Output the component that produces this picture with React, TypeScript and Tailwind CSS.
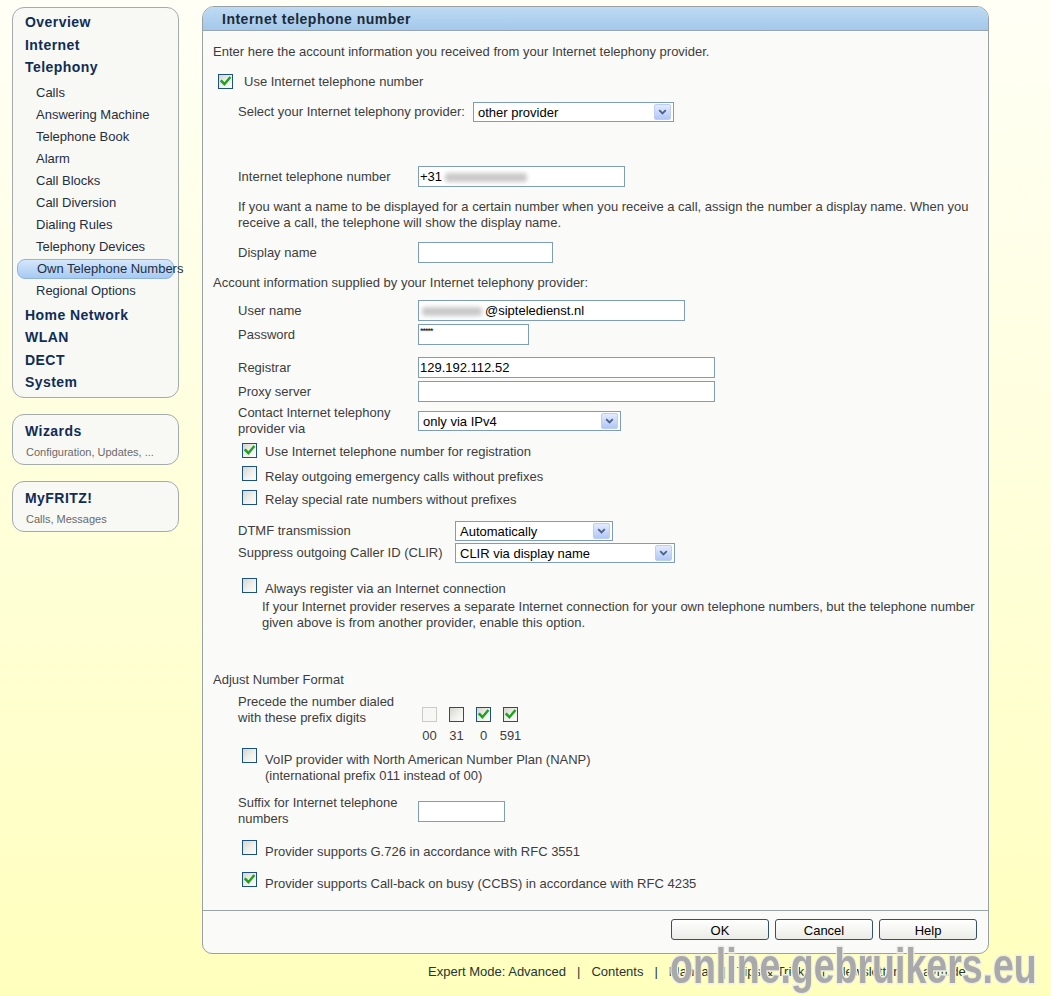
import React from "react";

const Check = () => (
  <svg width="13" height="13" viewBox="0 0 13 13">
    <path d="M2.6 6.2 L5.4 9.2 L10.6 3" fill="none" stroke="#21a121" strokeWidth="2.5" strokeLinecap="square" />
  </svg>
);

function Checkbox({ checked = false, disabled = false, className = "" }: { checked?: boolean; disabled?: boolean; className?: string }) {
  const base = disabled
    ? "border-[#cbcbc3] bg-[#f7f7f4]"
    : "border-[#1c5180] bg-linear-to-br from-[#d6d6ce] via-[#eeeeea] to-[#fdfdfc]";
  return (
    <span className={"flex shrink-0 w-[15px] h-[15px] border items-center justify-center " + base + " " + className}>
      {checked ? <Check /> : null}
    </span>
  );
}

function Select({ value, className = "" }: { value: string; className?: string }) {
  return (
    <div className={"flex h-[20px] items-center border border-[#7f9db9] bg-white " + className}>
      <span className="pl-[4px] pt-[1px] text-[13px] leading-[16px] text-black whitespace-nowrap">{value}</span>
      <span className="ml-auto mr-[2px] flex h-[16px] w-[17px] items-center justify-center rounded-[2px] border border-[#bccdf7] bg-linear-to-b from-[#e3ebfe] to-[#b3c7f5]">
        <svg width="9" height="6" viewBox="0 0 9 6">
          <path d="M1.2 1.2 L4.5 4.4 L7.8 1.2" fill="none" stroke="#4d6185" strokeWidth="1.8" />
        </svg>
      </span>
    </div>
  );
}

function Input({ className = "", children }: { className?: string; children?: React.ReactNode }) {
  return (
    <div className={"flex h-[21px] items-center border border-[#7f9db9] bg-white pl-[1px] pt-[1px] text-[13px] leading-[16px] text-black whitespace-nowrap overflow-hidden " + className}>
      {children}
    </div>
  );
}

const Blur = ({ className = "" }: { className?: string }) => (
  <span className={"inline-block h-[9px] rounded-[3px] bg-[#c9c9c9] blur-[2px] " + className} />
);

function Heading({ children, h = "h-[22px]" }: { children: React.ReactNode; h?: string }) {
  return (
    <div className={"flex items-center pl-[12px] text-[14px] font-bold tracking-[0.45px] text-[#0f2d55] " + h}>{children}</div>
  );
}

function Sub({ children }: { children: React.ReactNode }) {
  return <div className="flex h-[22px] items-center pl-[23px] text-[13px] text-[#1f2f3f] whitespace-nowrap">{children}</div>;
}

function Button({ children }: { children: React.ReactNode }) {
  return (
    <div className="flex h-[21px] w-[98px] items-center justify-center rounded-[3px] border border-[#34506c] bg-linear-to-b from-[#ffffff] to-[#ebebe6] pt-[2px] text-[13px] text-black">
      {children}
    </div>
  );
}

export default function App() {
  return (
    <div className="relative flex h-[996px] w-[1051px] overflow-hidden bg-linear-to-b from-[#fffff6] to-[#ffffbd] font-['Liberation_Sans',Arial,sans-serif]">
      {/* Sidebar */}
      <aside className="ml-[12px] mt-[7px] flex w-[167px] shrink-0 flex-col">
        <div className="rounded-[12px] border border-[#a3abab] bg-[#f8f8f5] pt-[3px] pb-[4px]">
          <Heading h="h-[23px]">Overview</Heading>
          <Heading>Internet</Heading>
          <Heading>Telephony</Heading>
          <div className="mt-[4px]">
            <Sub>Calls</Sub>
            <Sub>Answering Machine</Sub>
            <Sub>Telephone Book</Sub>
            <Sub>Alarm</Sub>
            <Sub>Call Blocks</Sub>
            <Sub>Call Diversion</Sub>
            <Sub>Dialing Rules</Sub>
            <Sub>Telephony Devices</Sub>
            <div className="flex h-[22px] items-center">
              <div className="ml-[4px] flex h-[20px] w-[157px] items-center rounded-[8px] border border-[#8fb4de] bg-linear-to-b from-[#d5e7fb] to-[#a6caf2] pl-[19px] text-[13px] text-[#1f2f3f] whitespace-nowrap">
                Own Telephone Numbers
              </div>
            </div>
            <Sub>Regional Options</Sub>
          </div>
          <div className="mt-[2px]">
            <Heading>Home Network</Heading>
            <Heading h="h-[23px]">WLAN</Heading>
            <Heading>DECT</Heading>
            <Heading>System</Heading>
          </div>
        </div>

        <div className="mt-[16px] rounded-[12px] border border-[#a3abab] bg-[#f8f8f5] pt-[5px] pb-[4px]">
          <Heading>Wizards</Heading>
          <div className="mt-[2px] flex h-[16px] items-center pl-[13px] text-[11px] text-[#6a6a6a] whitespace-nowrap">Configuration, Updates, ...</div>
        </div>

        <div className="mt-[16px] rounded-[12px] border border-[#a3abab] bg-[#f8f8f5] pt-[5px] pb-[4px]">
          <Heading>MyFRITZ!</Heading>
          <div className="mt-[2px] flex h-[16px] items-center pl-[13px] text-[11px] text-[#6a6a6a] whitespace-nowrap">Calls, Messages</div>
        </div>
      </aside>

      {/* Main */}
      <main className="ml-[23px] mt-[6px] w-[787px] shrink-0">
        <div className="overflow-hidden rounded-t-[12px] rounded-b-[10px] border border-[#98a2a4] bg-[#fafaf8]">
          <div className="flex h-[24px] items-center border-b border-[#9aa6ae] bg-linear-to-b from-[#bedaf3] to-[#a4c8ea] pl-[19px] pt-[1px] text-[14px] font-bold tracking-[0.5px] text-[#1c2a38]">
            Internet telephone number
          </div>

          <div className="px-[10px] text-[13px] leading-[16px] text-[#3d3d3d]">
            <p className="mt-[13px] whitespace-nowrap">Enter here the account information you received from your Internet telephony provider.</p>

            <div className="mt-[12px] flex h-[20px] items-center pl-[5px]">
              <Checkbox checked className="-mt-[1px]" />
              <span className="ml-[11px]">Use Internet telephone number</span>
            </div>

            <div className="mt-[10px] flex h-[20px] items-center pl-[25px]">
              <span className="w-[235px] shrink-0 whitespace-nowrap">Select your Internet telephony provider:</span>
              <Select value="other provider" className="w-[201px]" />
            </div>

            <div className="mt-[44px] flex h-[21px] items-center pl-[25px]">
              <span className="w-[180px] shrink-0">Internet telephone number</span>
              <Input className="w-[207px]">
                +31<Blur className="ml-[3px] w-[82px]" />
              </Input>
            </div>

            <p className="mt-[12px] pl-[25px] whitespace-nowrap">
              If you want a name to be displayed for a certain number when you receive a call, assign the number a display name. When you
              <br />
              receive a call, the telephone will show the display name.
            </p>

            <div className="mt-[11px] flex h-[21px] items-center pl-[25px]">
              <span className="w-[180px] shrink-0">Display name</span>
              <Input className="w-[135px]" />
            </div>

            <p className="mt-[12px] whitespace-nowrap">Account information supplied by your Internet telephony provider:</p>

            <div className="mt-[9px] flex h-[21px] items-center pl-[25px]">
              <span className="w-[180px] shrink-0">User name</span>
              <Input className="w-[267px]">
                <Blur className="ml-[2px] w-[60px]" />
                <span className="ml-[3px]">@sipteledienst.nl</span>
              </Input>
            </div>

            <div className="mt-[3px] flex h-[21px] items-center pl-[25px]">
              <span className="w-[180px] shrink-0">Password</span>
              <div className="h-[21px] w-[111px] border border-[#7f9db9] bg-white pl-[1px] pt-[2px] text-[9px] leading-[9px] tracking-[-1px] text-black">*****</div>
            </div>

            <div className="mt-[12px] flex h-[21px] items-center pl-[25px]">
              <span className="w-[180px] shrink-0">Registrar</span>
              <Input className="w-[297px]">129.192.112.52</Input>
            </div>

            <div className="mt-[3px] flex h-[21px] items-center pl-[25px]">
              <span className="w-[180px] shrink-0">Proxy server</span>
              <Input className="w-[297px]" />
            </div>

            <div className="mt-[3px] flex items-center pl-[25px]">
              <span className="w-[180px] shrink-0">
                Contact Internet telephony
                <br />
                provider via
              </span>
              <Select value="only via IPv4" className="w-[203px]" />
            </div>

            <div className="mt-[7px] flex items-start pl-[29px]">
              <Checkbox checked className="-mt-[1px]" />
              <span className="ml-[8px]">Use Internet telephone number for registration</span>
            </div>
            <div className="mt-[9px] flex items-start pl-[29px]">
              <Checkbox className="-mt-[3px]" />
              <span className="ml-[8px]">Relay outgoing emergency calls without prefixes</span>
            </div>
            <div className="mt-[7px] flex items-start pl-[29px]">
              <Checkbox className="-mt-[2px]" />
              <span className="ml-[8px]">Relay special rate numbers without prefixes</span>
            </div>

            <div className="mt-[13px] flex h-[20px] items-center pl-[25px]">
              <span className="w-[217px] shrink-0">DTMF transmission</span>
              <Select value="Automatically" className="w-[158px]" />
            </div>
            <div className="mt-[2px] flex h-[20px] items-center pl-[25px]">
              <span className="w-[217px] shrink-0 whitespace-nowrap">Suppress outgoing Caller ID (CLIR)</span>
              <Select value="CLIR via display name" className="w-[220px]" />
            </div>

            <div className="mt-[18px] flex items-start pl-[29px]">
              <Checkbox className="-mt-[3px]" />
              <span className="ml-[8px]">Always register via an Internet connection</span>
            </div>
            <p className="mt-[2px] pl-[49px] whitespace-nowrap">
              If your Internet provider reserves a separate Internet connection for your own telephone numbers, but the telephone number
              <br />
              given above is from another provider, enable this option.
            </p>

            <p className="mt-[41px]">Adjust Number Format</p>

            <div className="mt-[6px] flex items-start pl-[25px]">
              <span className="w-[180px] shrink-0">
                Precede the number dialed
                <br />
                with these prefix digits
              </span>
              <div className="ml-[4px] flex gap-[12px] pt-[13px]">
                {[
                  { l: "00", c: false, d: true },
                  { l: "31", c: false, d: false },
                  { l: "0", c: true, d: false },
                  { l: "591", c: true, d: false },
                ].map((p) => (
                  <div key={p.l} className="flex w-[15px] flex-col items-center">
                    <Checkbox checked={p.c} disabled={p.d} />
                    <span className="mt-[6px] whitespace-nowrap">{p.l}</span>
                  </div>
                ))}
              </div>
            </div>

            <div className="mt-[8px] flex items-start pl-[29px]">
              <Checkbox className="-mt-[4px]" />
              <span className="ml-[8px]">
                VoIP provider with North American Number Plan (NANP)
                <br />
                (international prefix 011 instead of 00)
              </span>
            </div>

            <div className="mt-[11px] flex items-center pl-[25px]">
              <span className="w-[180px] shrink-0">
                Suffix for Internet telephone
                <br />
                numbers
              </span>
              <Input className="w-[87px]" />
            </div>

            <div className="mt-[17px] flex items-start pl-[29px]">
              <Checkbox className="-mt-[4px]" />
              <span className="ml-[8px]">Provider supports G.726 in accordance with RFC 3551</span>
            </div>
            <div className="mt-[16px] flex items-start pl-[29px]">
              <Checkbox checked className="-mt-[4px]" />
              <span className="ml-[8px]">Provider supports Call-back on busy (CCBS) in accordance with RFC 4235</span>
            </div>
          </div>

          <div className="mt-[18px] flex justify-end gap-[6px] border-t border-[#9aa3a6] pt-[8px] pb-[13px] pr-[11px]">
            <Button>OK</Button>
            <Button>Cancel</Button>
            <Button>Help</Button>
          </div>
        </div>

        <div className="mt-[10px] flex gap-[11px] pl-[226px] text-[13px] leading-[16px] text-[#263636] whitespace-nowrap">
          <span>Expert Mode: Advanced</span>
          <span>|</span>
          <span>Contents</span>
          <span>|</span>
          <span>Manual</span>
          <span>|</span>
          <span>Tips &amp; Tricks</span>
          <span>|</span>
          <span>Newsletter</span>
          <span>|</span>
          <span>avm.de</span>
        </div>
      </main>

      {/* Watermark overlay */}
      <div className="pointer-events-none absolute left-[670px] top-[936px] origin-left scale-x-[0.75] whitespace-nowrap text-[50px] font-bold leading-[60px] text-[#a9a9a9] [-webkit-text-stroke:3px_#efefea] [paint-order:stroke_fill]">
        online.gebruikers.eu
      </div>
    </div>
  );
}
